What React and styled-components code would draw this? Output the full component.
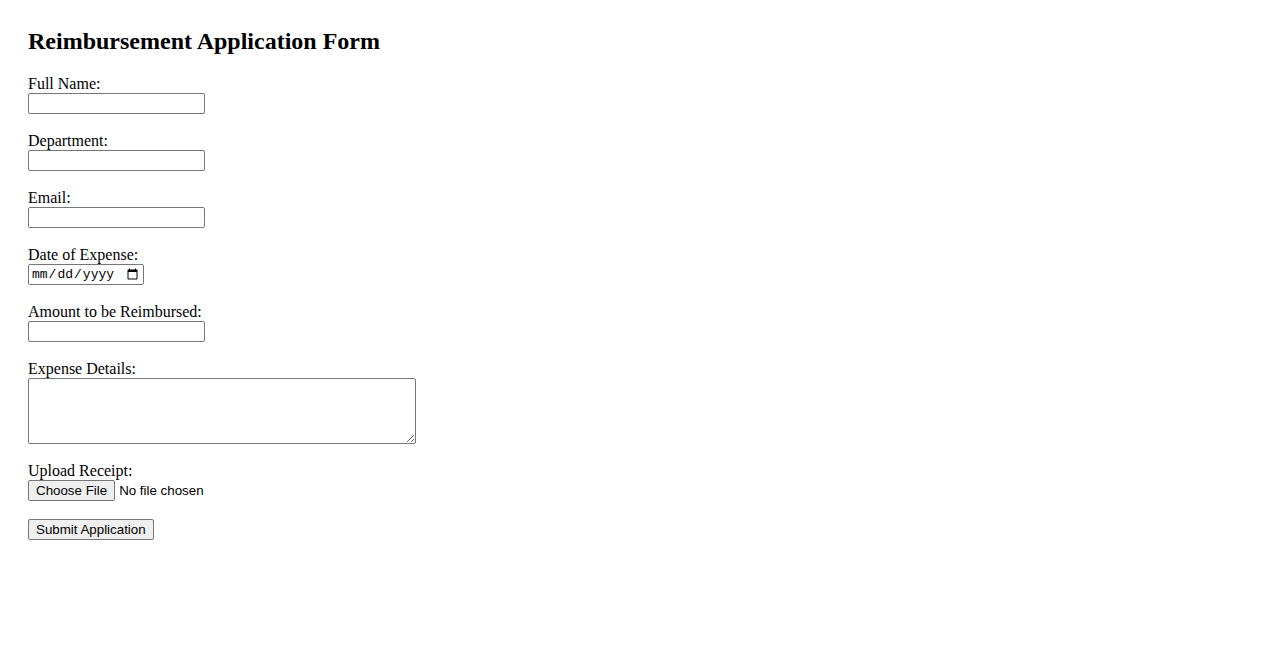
import React from "react";
import styled, { createGlobalStyle } from "styled-components";

const GlobalStyle = createGlobalStyle`
  body {
    margin: 0;
    background: #fff;
    color: #000;
    font-family: "Liberation Serif", "Times New Roman", serif;
  }
`;

const fields = [
  { id: "fullName", label: "Full Name:", type: "text" },
  { id: "department", label: "Department:", type: "text" },
  { id: "email", label: "Email:", type: "email" },
  { id: "date", label: "Date of Expense:", type: "date" },
  { id: "amount", label: "Amount to be Reimbursed:", type: "text" },
];

const App = () => {
  return (
    <>
      <GlobalStyle />
      <Page>
        <Title>Reimbursement Application Form</Title>
        <form onSubmit={(e) => e.preventDefault()}>
          {fields.map((f) => (
            <Field key={f.id}>
              <Label htmlFor={f.id}>{f.label}</Label>
              <TextInput id={f.id} type={f.type} $date={f.type === "date"} />
            </Field>
          ))}
          <Field>
            <Label htmlFor="details">Expense Details:</Label>
            <Details id="details" />
          </Field>
          <Field>
            <Label htmlFor="receipt">Upload Receipt:</Label>
            <FileInput id="receipt" type="file" />
          </Field>
          <SubmitBtn type="submit">Submit Application</SubmitBtn>
        </form>
      </Page>
    </>
  );
};

const Page = styled.div`
  padding: 28px;
`;

const Title = styled.h2`
  margin: 0 0 20px 0;
  font-size: 24px;
  line-height: 27px;
  font-weight: bold;
`;

const Field = styled.div`
  margin-bottom: 18px;
`;

const Label = styled.label`
  display: block;
  font-size: 16px;
  line-height: 18px;
`;

const controlBase = `
  display: block;
  box-sizing: border-box;
  margin: 0;
  border: 1px solid #767676;
  border-radius: 2px;
  background: #fff;
  font-family: "Liberation Sans", Arial, sans-serif;
  font-size: 13.333px;
`;

const TextInput = styled.input`
  ${controlBase}
  width: ${(p) => (p.$date ? "116px" : "177px")};
  height: 21px;
  padding: 1px 2px;
  font-family: ${(p) =>
    p.$date ? '"Liberation Mono", monospace' : '"Liberation Sans", Arial, sans-serif'};
  font-size: ${(p) => (p.$date ? "13px" : "13.333px")};
`;

const Details = styled.textarea`
  ${controlBase}
  width: 388px;
  height: 66px;
  padding: 2px;
  font-family: "Liberation Mono", monospace;
`;

const FileInput = styled.input`
  display: block;
  margin: 0;
  height: 21px;
  font-family: "Liberation Sans", Arial, sans-serif;
  font-size: 13.333px;
  color: #000;

  &::file-selector-button {
    height: 21px;
    margin: 0 4px 0 0;
    padding: 1px 7px;
    border: 1px solid #767676;
    border-radius: 2px;
    background: #efefef;
    font-family: "Liberation Sans", Arial, sans-serif;
    font-size: 13.333px;
    color: #000;
  }
`;

const SubmitBtn = styled.button`
  display: block;
  box-sizing: border-box;
  height: 21px;
  margin: 0;
  padding: 1px 7px;
  border: 1px solid #767676;
  border-radius: 2px;
  background: #efefef;
  font-family: "Liberation Sans", Arial, sans-serif;
  font-size: 13.333px;
  color: #000;
`;

export default App;
